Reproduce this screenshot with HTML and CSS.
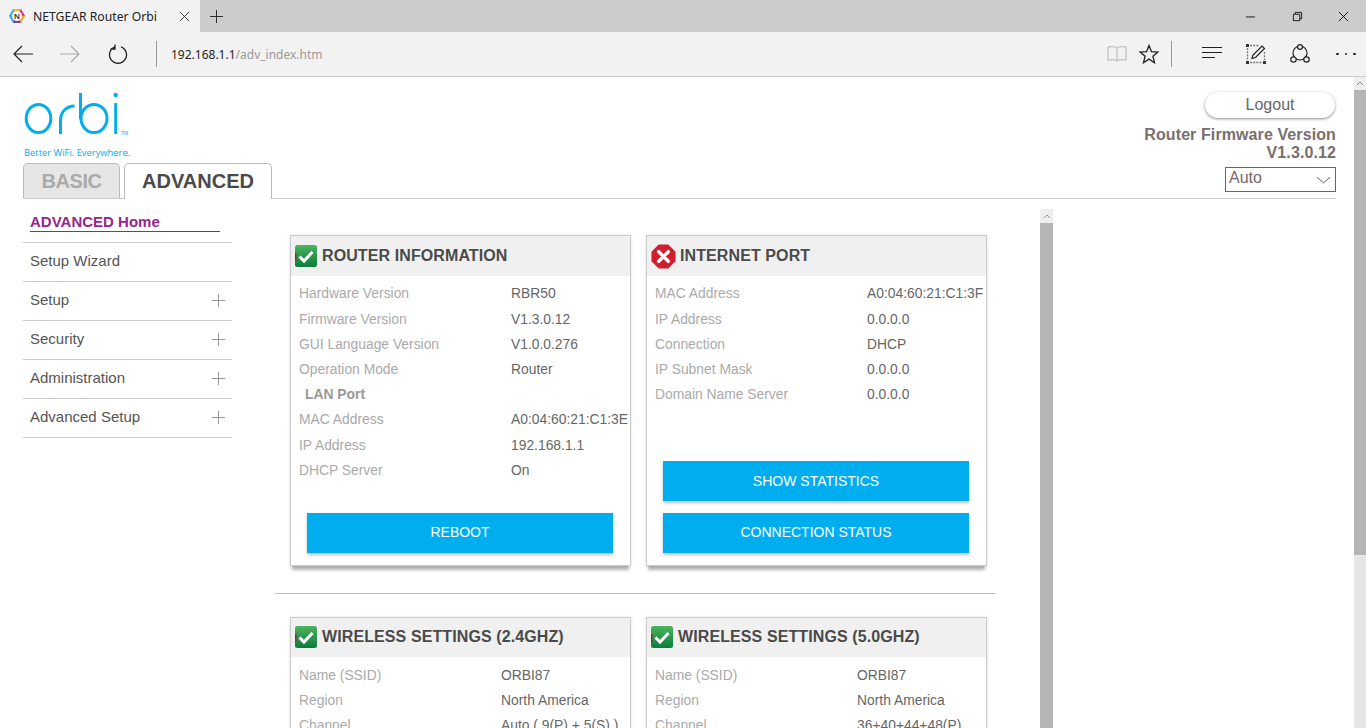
FILE: index.html
```html
<!DOCTYPE html>
<html lang="en">
<head>
<meta charset="utf-8">
<title>NETGEAR Router Orbi</title>
<link rel="stylesheet" href="styles.css">
</head>
<body>
<div class="tabbar">
  <div class="tab">
    <svg class="favicon" viewBox="0 0 16 16"><polygon points="4,1 12,1 16,8 12,15 4,15 0,8" fill="#f5a623"/><polygon points="4,1 12,1 8,8" fill="#f7b733"/><polygon points="12,1 16,8 8,8" fill="#e0389a"/><polygon points="0,8 4,1 8,8 4,15" fill="#29b6f6"/><polygon points="4,15 12,15 8,8" fill="#7b3fa0"/><circle cx="8" cy="8" r="5" fill="#fff"/><text x="8" y="11" text-anchor="middle" class="fav-n">N</text></svg>
    <span class="tab-title">NETGEAR Router Orbi</span>
    <svg class="tab-x" viewBox="0 0 12 12"><path d="M1 1l10 10M11 1L1 11" stroke="#333" fill="none"/></svg>
  </div>
  <svg class="tab-plus" viewBox="0 0 14 14"><path d="M7 0v14M0 7h14" stroke="#222" fill="none"/></svg>
  <div class="win-controls">
    <svg class="win-icon" viewBox="0 0 12 12"><path d="M1 6.500h10" stroke="#111" fill="none"/></svg>
    <svg class="win-icon" viewBox="0 0 12 12"><path d="M1.500 3.500h7v7h-7zM3.500 3.500v-2h7v7h-2" stroke="#111" fill="none"/></svg>
    <svg class="win-icon" viewBox="0 0 12 12"><path d="M1 1l10 10M11 1L1 11" stroke="#111" fill="none"/></svg>
  </div>
</div>
<div class="addressbar">
  <svg class="nav-icon back" viewBox="0 0 20 18"><path d="M20 9H1M9 1L1 9l8 8" stroke="#222" stroke-width="1.200" fill="none"/></svg>
  <svg class="nav-icon fwd" viewBox="0 0 20 18"><path d="M0 9h19M11 1l8 8-8 8" stroke="#aaa" stroke-width="1.200" fill="none"/></svg>
  <svg class="nav-icon reload" viewBox="0 0 20 20"><path d="M7 2.800A8.500 8.500 0 1 0 13 2.800M7 0.500v4.500h-4.500" stroke="#222" stroke-width="1.300" fill="none"/></svg>
  <div class="sep sep-url"></div>
  <div class="url"><span class="url-host">192.168.1.1</span>/adv_index.htm</div>
  <svg class="tool book" viewBox="0 0 20 18"><path d="M10 3C8 1.500 4 1.500 1 2v13c3-.5 7-.5 9 1 2-1.500 6-1.500 9-1V2c-3-.5-7-.5-9 1zM10 3v13" stroke="#c4c4c4" stroke-width="1.300" fill="none"/></svg>
  <svg class="tool star" viewBox="0 0 20 20"><polygon points="10,1.500 12.400,7.600 19,8 13.900,12.200 15.500,18.700 10,15.100 4.500,18.700 6.100,12.200 1,8 7.600,7.600" stroke="#222" stroke-width="1.300" fill="none"/></svg>
  <div class="sep sep-tools"></div>
  <svg class="tool hub" viewBox="0 0 20 14"><path d="M0 1.500h20M0 6.500h20M0 11.500h13" stroke="#222" stroke-width="1.100" fill="none"/></svg>
  <svg class="tool note" viewBox="0 0 20 20"><path d="M4 1.500h9M4 18.500h12M1.500 4v12M18.500 8v8" stroke="#777" stroke-width="1.300" stroke-dasharray="2 1.200" fill="none"/><path d="M0 0h3v3H0zM0 17h3v3H0zM17 17h3v3h-3z" fill="#333"/><path d="M6 14.500l1-3.500L16 2l2.500 2.500-9 9z" stroke="#222" stroke-width="1.200" fill="#f2f2f2"/></svg>
  <svg class="tool share" viewBox="0 0 20 20"><circle cx="10" cy="9" r="7" stroke="#222" stroke-width="1.200" fill="none"/><circle cx="10" cy="3" r="2.400" stroke="#222" stroke-width="1.200" fill="#f2f2f2"/><circle cx="3.500" cy="15.500" r="2.700" stroke="#222" stroke-width="1.200" fill="#f2f2f2"/><circle cx="16.500" cy="15.500" r="2.700" stroke="#222" stroke-width="1.200" fill="#f2f2f2"/></svg>
  <div class="more"><i></i><i></i><i></i></div>
</div>
<div class="viewport">
  <div class="page">
    <header class="top">
      <div class="brand">
        <svg class="logo" viewBox="0 0 110 46"><g fill="none" stroke="#00aeef" stroke-width="3"><ellipse cx="14.500" cy="26.500" rx="12.300" ry="14"/><path d="M36.500 42V28c0-8 6-14 14-14"/><ellipse cx="70" cy="26.500" rx="13" ry="14"/><path d="M56.500 1v26"/><path d="M91.700 11v31"/></g><circle cx="91.700" cy="3" r="2.200" fill="#00aeef"/><text x="97" y="43" class="tm">TM</text></svg>
        <div class="tagline">Better WiFi. Everywhere.</div>
        <div class="tabs">
          <div class="main-tab basic">BASIC</div>
          <div class="main-tab advanced">ADVANCED</div>
        </div>
      </div>
      <div class="top-right">
        <div class="logout">Logout</div>
        <div class="fw">Router Firmware Version<br>V1.3.0.12</div>
        <div class="lang"><span>Auto</span><svg class="lang-arrow" viewBox="0 0 16 8"><path d="M1 1l7 6 7-6" stroke="#555" fill="none"/></svg></div>
      </div>
    </header>
    <div class="body">
      <nav class="nav">
        <div class="nav-item home"><span>ADVANCED Home</span></div>
        <div class="nav-item">Setup Wizard</div>
        <div class="nav-item">Setup<b class="plus"></b></div>
        <div class="nav-item">Security<b class="plus"></b></div>
        <div class="nav-item">Administration<b class="plus"></b></div>
        <div class="nav-item">Advanced Setup<b class="plus"></b></div>
      </nav>
      <main class="frame">
        <div class="cards">
          <section class="card">
            <h2 class="card-head"><svg class="ok" viewBox="0 0 22 22"><use href="#check"/></svg>ROUTER INFORMATION</h2>
            <dl class="rows">
              <div class="row"><dt>Hardware Version</dt><dd>RBR50</dd></div>
              <div class="row"><dt>Firmware Version</dt><dd>V1.3.0.12</dd></div>
              <div class="row"><dt>GUI Language Version</dt><dd>V1.0.0.276</dd></div>
              <div class="row"><dt>Operation Mode</dt><dd>Router</dd></div>
              <div class="row"><dt class="sub">LAN Port</dt></div>
              <div class="row"><dt>MAC Address</dt><dd>A0:04:60:21:C1:3E</dd></div>
              <div class="row"><dt>IP Address</dt><dd>192.168.1.1</dd></div>
              <div class="row"><dt>DHCP Server</dt><dd>On</dd></div>
            </dl>
            <div class="actions"><div class="btn">REBOOT</div></div>
          </section>
          <section class="card">
            <h2 class="card-head"><svg class="bad" viewBox="0 0 26 26"><polygon points="8,0.500 18,0.500 25.500,8 25.500,18 18,25.500 8,25.500 0.500,18 0.500,8" fill="#cf1f2e"/><path d="M8 8l10 10M18 8L8 18" stroke="#fff" stroke-width="3.600" stroke-linecap="round"/></svg>INTERNET PORT</h2>
            <dl class="rows">
              <div class="row"><dt>MAC Address</dt><dd>A0:04:60:21:C1:3F</dd></div>
              <div class="row"><dt>IP Address</dt><dd>0.0.0.0</dd></div>
              <div class="row"><dt>Connection</dt><dd>DHCP</dd></div>
              <div class="row"><dt>IP Subnet Mask</dt><dd>0.0.0.0</dd></div>
              <div class="row"><dt>Domain Name Server</dt><dd>0.0.0.0</dd></div>
            </dl>
            <div class="actions"><div class="btn btn-upper">SHOW STATISTICS</div><div class="btn">CONNECTION STATUS</div></div>
          </section>
        </div>
        <hr class="divider">
        <div class="cards">
          <section class="card">
            <h2 class="card-head head-short"><svg class="ok" viewBox="0 0 22 22"><use href="#check"/></svg>WIRELESS SETTINGS (2.4GHZ)</h2>
            <dl class="rows narrow">
              <div class="row"><dt>Name (SSID)</dt><dd>ORBI87</dd></div>
              <div class="row"><dt>Region</dt><dd>North America</dd></div>
              <div class="row"><dt>Channel</dt><dd>Auto ( 9(P) + 5(S) )</dd></div>
            </dl>
          </section>
          <section class="card">
            <h2 class="card-head head-short"><svg class="ok" viewBox="0 0 22 22"><use href="#check"/></svg>WIRELESS SETTINGS (5.0GHZ)</h2>
            <dl class="rows narrow">
              <div class="row"><dt>Name (SSID)</dt><dd>ORBI87</dd></div>
              <div class="row"><dt>Region</dt><dd>North America</dd></div>
              <div class="row"><dt>Channel</dt><dd>36+40+44+48(P)</dd></div>
            </dl>
          </section>
        </div>
      </main>
      <div class="inner-scroll"><div class="inner-arrow"><svg viewBox="0 0 8 5"><path d="M1 4l3-3 3 3" stroke="#999" fill="none"/></svg></div><div class="inner-thumb"></div></div>
    </div>
  </div>
  <div class="page-scroll"><div class="page-arrow"><svg viewBox="0 0 8 5"><path d="M1 4l3-3 3 3" stroke="#888" fill="none"/></svg></div><div class="page-thumb"></div></div>
</div>
<svg class="defs" width="0" height="0"><defs><linearGradient id="gr" x1="0" y1="0" x2="0" y2="1"><stop offset="0" stop-color="#4db35f"/><stop offset="1" stop-color="#0a7d3b"/></linearGradient><g id="check"><rect width="22" height="22" rx="2.500" fill="url(#gr)"/><rect y="8" width="1.500" height="8" fill="#8a3030"/><path d="M4.500 11.500l4.500 4.500 8.500-9" stroke="#fff" stroke-width="3" fill="none"/></g></defs></svg>
</body>
</html>
```
FILE: styles.css
```css
* { box-sizing: border-box; }
html, body { margin: 0; height: 728px; overflow: hidden; }
body { width: 1366px; background: #fff; font-family: "Liberation Sans", Arial, sans-serif; color: #555; }
svg { display: block; flex: none; }
.defs { position: absolute; }

.tabbar { display: flex; align-items: center; height: 32px; background: #ccc; }
.tab { display: flex; align-items: center; width: 200px; height: 32px; background: #f2f2f2; padding-left: 9px; }
.favicon { width: 16px; height: 16px; }
.fav-n { font: bold 8px "Liberation Sans", sans-serif; fill: #333; }
.tab-title { font: 12.200px "Noto Sans", sans-serif; color: #222; margin-left: 8px; width: 144px; white-space: nowrap; }
.tab-x { width: 11px; height: 11px; margin-left: 2px; }
.tab-plus { width: 13px; height: 13px; margin-left: 10px; }
.win-controls { display: flex; margin-left: auto; padding-right: 17px; gap: 35.500px; }
.win-icon { width: 11px; height: 11px; }

.addressbar { display: flex; align-items: center; height: 45px; background: #f2f2f2; border-bottom: 1px solid #ccc; }
.nav-icon.back { width: 20px; height: 18px; margin-left: 13px; }
.nav-icon.fwd { width: 20px; height: 18px; margin-left: 27px; }
.nav-icon.reload { width: 20px; height: 20px; margin-left: 28px; }
.sep { width: 1px; height: 26px; background: #999; }
.sep-url { margin-left: 28px; }
.url { font: 12px "Noto Sans", sans-serif; color: #999; margin-left: 14px; width: 936px; white-space: nowrap; }
.url-host { color: #222; }
.tool.book { width: 20px; height: 18px; }
.tool.star { width: 20px; height: 20px; margin-left: 12px; }
.sep-tools { margin-left: 12px; }
.tool.hub { width: 20px; height: 14px; margin: 0 0 3px 30px; }
.tool.note { width: 20px; height: 20px; margin-left: 24px; }
.tool.share { width: 20px; height: 20px; margin-left: 24px; }
.more { display: flex; gap: 6px; margin-left: 26px; }
.more i { width: 2.500px; height: 2.500px; background: #222; border-radius: 50%; }

.viewport { display: flex; height: 651px; overflow: hidden; }
.page { width: 1354px; padding: 0 18px 0 23px; }
.page-scroll { width: 12px; background: #e6e6e6; }
.page-arrow { height: 13px; background: #eee; display: flex; align-items: center; justify-content: center; }
.page-arrow svg { width: 8px; height: 5px; }
.page-thumb { height: 465px; background: #b5b5b5; }

.top { display: flex; justify-content: space-between; height: 122px; border-bottom: 1px solid #ccc; }
.brand { display: flex; flex-direction: column; }
.logo { width: 110px; height: 46px; margin: 15px 0 0 1px; }
.tm { font: 5px "Liberation Sans", sans-serif; fill: #00aeef; }
.tagline { font: 9.400px "Open Sans", sans-serif; color: #00aeef; margin: 8px 0 0 1px; height: 13px; line-height: 13px; white-space: nowrap; }
.tabs { display: flex; gap: 4px; margin-top: 4px; height: 36px; }
.main-tab { display: flex; align-items: center; justify-content: center; height: 36px; border: 1px solid #bbb; border-bottom: 0; border-radius: 5px 5px 0 0; font-size: 20px; font-weight: bold; }
.basic { width: 97px; background: #e6e6e6; color: #aaa; height: 35px; letter-spacing: -.4px; }
.advanced { width: 148px; background: #fff; color: #4a4a4a; }
.top-right { display: flex; flex-direction: column; align-items: flex-end; color: #7a6e6e; }
.logout { width: 130px; height: 26px; margin: 15px 1px 0 0; border-radius: 13px; background: #fff; box-shadow: 0 1px 3px rgba(0,0,0,.45); text-align: center; font-size: 16px; line-height: 25px; color: #666; }
.fw { font-size: 16px; font-weight: bold; line-height: 18px; letter-spacing: .1px; text-align: right; margin-top: 8px; }
.lang { display: flex; justify-content: space-between; align-items: center; width: 111px; height: 25px; border: 1px solid #666; margin-top: 5px; padding: 0 4px 4px 3px; font-size: 16px; color: #766; }
.lang-arrow { width: 15px; height: 8px; margin-top: 4px; }

.body { display: flex; }
.nav { width: 209px; margin-top: 5px; }
.nav-item { display: flex; justify-content: space-between; align-items: center; height: 39px; padding: 0 7px 4px; border-bottom: 1px solid #ccc; font-size: 15px; color: #555; }
.nav-item.home { display: block; padding: 9px 12px 0 7px; font-weight: bold; color: #96248c; }
.home span { display: block; border-bottom: 1px solid #96248c; height: 19px; line-height: 18px; }
.plus { width: 13px; height: 13px; margin: 2px 0 0; background: linear-gradient(#999,#999) center/13px 1px no-repeat, linear-gradient(#999,#999) center/1px 13px no-repeat; }

.frame { width: 808px; padding: 36px 0 0 58px; height: 529px; overflow: hidden; }
.cards { display: flex; gap: 15px; }
.card { flex: none; width: 341px; height: 331px; border: 1px solid #ccc; box-shadow: 0 6px 3px -2px rgba(0,0,0,.3), 0 0 3px rgba(0,0,0,.12); display: flex; flex-direction: column; }
.card-head { display: flex; align-items: center; gap: 5px; height: 40px; margin: 0; padding-left: 4px; background: #f0f0f0; font-size: 16px; font-weight: bold; letter-spacing: .1px; color: #4a4a4a; }
.head-short { height: 39px; padding-bottom: 1px; }
.ok { width: 22px; height: 22px; }
.bad { width: 25px; height: 25px; margin-right: -1px; }
.rows { margin: 4.890px 0 0; padding: 0 0 0 8px; font-size: 13.850px; }
.row { display: flex; height: 25.200px; align-items: center; }
.row dt { width: 212px; color: #aaa; }
.row dt.sub { font-weight: bold; color: #999; padding-left: 6px; }
.row dd { margin: 0; color: #666; white-space: nowrap; }
.narrow { margin-top: 5px; }
.narrow .row dt { width: 202px; }
.actions { margin-top: auto; padding: 0 17px 12px 16px; display: flex; flex-direction: column; gap: 12px; }
.btn { height: 40px; background: #00aeef; color: #fff; font-size: 14px; line-height: 38px; text-align: center; box-shadow: 0 2px 3px rgba(0,0,0,.25); }
.btn-upper { line-height: 40px; }
.divider { width: 720px; height: 1px; border: 0; background: #bbb; margin: 27px 0 23px -15px; }

.inner-scroll { width: 13px; margin-top: 10px; display: flex; flex-direction: column; height: 519px; }
.inner-arrow { height: 14px; background: #eee; display: flex; align-items: center; justify-content: center; }
.inner-arrow svg { width: 8px; height: 5px; }
.inner-thumb { flex: 1; background: #b5b5b5; }
```
